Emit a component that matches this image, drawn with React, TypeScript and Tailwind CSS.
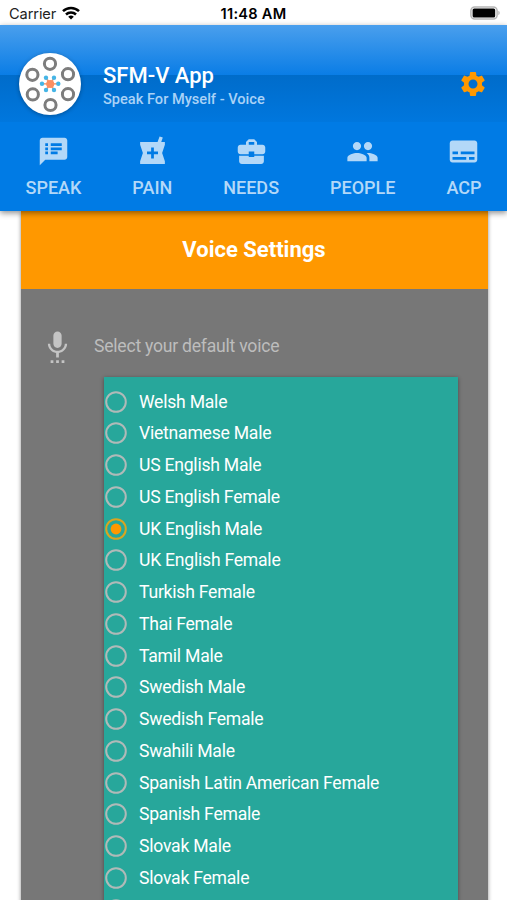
import React from "react";
import {
  MdSpeakerNotes,
  MdLocalPharmacy,
  MdBusinessCenter,
  MdPeople,
  MdSubtitles,
  MdSettings,
  MdSettingsVoice,
} from "react-icons/md";

const tabs = [
  { label: "SPEAK", Icon: MdSpeakerNotes },
  { label: "PAIN", Icon: MdLocalPharmacy },
  { label: "NEEDS", Icon: MdBusinessCenter },
  { label: "PEOPLE", Icon: MdPeople },
  { label: "ACP", Icon: MdSubtitles },
];

const voices = [
  "Welsh Male",
  "Vietnamese Male",
  "US English Male",
  "US English Female",
  "UK English Male",
  "UK English Female",
  "Turkish Female",
  "Thai Female",
  "Tamil Male",
  "Swedish Male",
  "Swedish Female",
  "Swahili Male",
  "Spanish Latin American Female",
  "Spanish Female",
  "Slovak Male",
  "Slovak Female",
  "",
];

const ringSpots = [
  [31, 10.8],
  [49, 21.2],
  [49, 41.2],
  [31.5, 52],
  [13.8, 41.4],
  [13.4, 21.8],
];

const dotSpots = [
  [27, 24.8],
  [35, 24.8],
  [39.3, 30.8],
  [35, 37],
  [27, 37],
  [23, 30.8],
];

function Logo() {
  return (
    <svg viewBox="0 0 62 62" className="size-[62px] rounded-full bg-white shadow-[0_1px_4px_rgba(0,0,0,0.3)]">
      {ringSpots.map(([x, y]) => (
        <circle key={`${x}-${y}`} cx={x} cy={y} r="5.6" fill="none" stroke="#7d7d7d" strokeWidth="3" />
      ))}
      {dotSpots.map(([x, y]) => (
        <g key={`${x}-${y}`}>
          <line x1="31.2" y1="31" x2={x} y2={y} stroke="#f59a70" strokeWidth="1.6" />
          <circle cx={x} cy={y} r="2.2" fill="#45b5e6" />
        </g>
      ))}
      <circle cx="31.2" cy="31" r="4" fill="#fb8f62" />
    </svg>
  );
}

function StatusBar() {
  return (
    <div className="grid h-[25px] shrink-0 grid-cols-[1fr_auto_1fr] items-center bg-white pt-[3px] pr-[7px] pl-[7px] font-['Inter',sans-serif] text-black">
      <div className="flex items-center gap-[6px] pl-[2px]">
        <span className="text-[14.6px] leading-5 tracking-[-0.1px] text-[#222]">Carrier</span>
        <svg viewBox="0 0 18 14" className="mb-[2px] h-[14px] w-[18px]" fill="none" stroke="#000" strokeWidth="2.5">
          <path d="M1 5.2a11.4 11.4 0 0 1 16 0" />
          <path d="M4 8.5a7.2 7.2 0 0 1 10 0" />
          <path d="M9 13.6 6.2 10.8a4 4 0 0 1 5.6 0z" fill="#000" stroke="none" />
        </svg>
      </div>
      <div className="text-center text-[14.6px] leading-5 font-semibold tracking-[0.25px] whitespace-nowrap">11:48 AM</div>
      <svg viewBox="0 0 30 14" className="mb-[2px] h-[14px] w-[30px] justify-self-end">
        <rect x="0.9" y="0.9" width="26.2" height="12.2" rx="3.8" fill="#fff" stroke="#b5b5b5" strokeWidth="1.5" />
        <rect x="2.6" y="2.5" width="22.6" height="9" rx="1.6" fill="#000" />
        <path d="M28.3 4.8a2.4 2.4 0 0 1 0 4.4z" fill="#b5b5b5" />
      </svg>
    </div>
  );
}

function Header() {
  return (
    <header className="relative z-10 h-[186px] shrink-0 bg-[#007be5] shadow-[0_2px_6px_rgba(0,0,0,0.45)]">
      <div className="flex h-[97px] items-center bg-[linear-gradient(to_bottom,#4a9fed_0%,#0a7de6_50px,#006cca_50px,#0077de_100%)] pt-[20px] pr-[19px] pl-[19px]">
        <Logo />
        <div className="ml-[22px] flex-1 pt-[4px]">
          <div className="text-[22px] leading-[26px] font-medium text-white">SFM-V App</div>
          <div className="text-[14.6px] leading-[20px] font-medium text-[#a9d2f7]">Speak For Myself - Voice</div>
        </div>
        <MdSettings className="size-[30px] text-[#ff9800]" />
      </div>
      <nav className="flex h-[89px] justify-between pt-[13px] pr-[25.5px] pl-[25.5px]">
        {tabs.map(({ label, Icon }) => (
          <div key={label} className="flex flex-col items-center text-[#b3d8f8]">
            <Icon className="size-[33px]" />
            <span className="mt-[9px] text-[18px] leading-[22px] font-medium">{label}</span>
          </div>
        ))}
      </nav>
    </header>
  );
}

function VoiceOption({ name, selected }: { name: string; selected: boolean }) {
  return (
    <label className="flex h-[31.76px] items-center">
      <svg viewBox="0 0 22 22" className={selected ? "size-[22px] text-[#d9a520]" : "size-[22px] text-[#b0bab8]"}>
        <circle cx="11" cy="11" r="9.8" fill="none" stroke="currentColor" strokeWidth="2" />
        {selected && <circle cx="11" cy="11" r="5.4" fill="#ff9800" />}
      </svg>
      <span className="ml-[12px] text-[17.6px] leading-6 tracking-[-0.24px] text-white">{name}</span>
    </label>
  );
}

export default function App() {
  return (
    <div className="flex h-[900px] w-[507px] flex-col overflow-hidden bg-white font-['Roboto',sans-serif]">
      <StatusBar />
      <Header />
      <main className="mr-[19.5px] ml-[20.5px] flex-1 bg-[#777] shadow-[0_1px_4px_rgba(0,0,0,0.45)]">
        <h1 className="flex h-[78.4px] items-center justify-center bg-[#ff9800] pb-[1px] text-[22px] font-bold text-white">
          Voice Settings
        </h1>
        <div className="flex h-[87.6px] items-center pt-[26px] pl-[20px]">
          <MdSettingsVoice className="size-[33px] text-[#c4c4c4]" />
          <span className="ml-[20.5px] text-[17.6px] tracking-[-0.24px] text-[#bdbdbd]">Select your default voice</span>
        </div>
        <section className="mr-[30px] ml-[83px] h-[560px] bg-[#27a79b] pt-[8.7px] pl-[1.5px] shadow-[0_1px_4px_rgba(0,0,0,0.4)]">
          {voices.map((name) => (
            <VoiceOption key={name} name={name} selected={name === "UK English Male"} />
          ))}
        </section>
      </main>
    </div>
  );
}
